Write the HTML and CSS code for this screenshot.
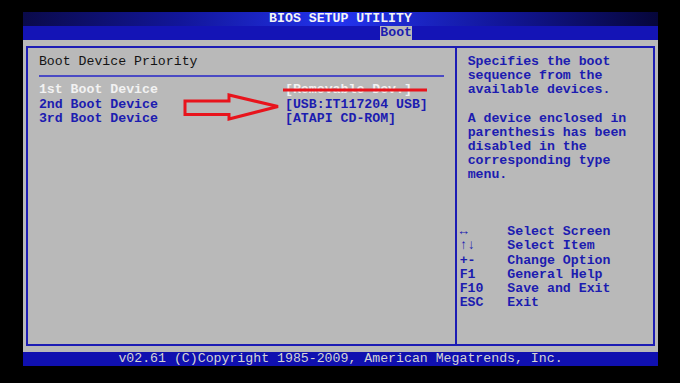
FILE: index.html
```html
<!DOCTYPE html>
<html>
<head>
<meta charset="utf-8">
<link rel="stylesheet" href="styles.css">
</head>
<body>
<div class="screen">
  <div class="title">BIOS SETUP UTILITY</div>
  <div class="menubar"><span class="tab">Boot</span></div>
  <div class="main">
    <div class="box">
      <div class="left">
        <div class="row heading">Boot Device Priority</div>
        <div class="row rule"><span class="rule-line"></span></div>
        <div class="devices">
          <span class="label white">1st Boot Device</span><span class="value white">[Removable Dev.]</span>
          <span class="label">2nd Boot Device</span><span class="value">[USB:IT117204 USB]</span>
          <span class="label">3rd Boot Device</span><span class="value">[ATAPI CD-ROM]</span>
        </div>
      </div>
      <div class="right">
        <div class="help">
          <div class="row">Specifies the boot</div>
          <div class="row">sequence from the</div>
          <div class="row">available devices.</div>
          <div class="row"></div>
          <div class="row">A device enclosed in</div>
          <div class="row">parenthesis has been</div>
          <div class="row">disabled in the</div>
          <div class="row">corresponding type</div>
          <div class="row">menu.</div>
        </div>
        <div class="keys">
          <span class="key">↔</span><span>Select Screen</span>
          <span class="key">↑↓</span><span>Select Item</span>
          <span class="key">+-</span><span>Change Option</span>
          <span class="key">F1</span><span>General Help</span>
          <span class="key">F10</span><span>Save and Exit</span>
          <span class="key">ESC</span><span>Exit</span>
        </div>
      </div>
    </div>
  </div>
  <div class="footer">v02.61 (C)Copyright 1985-2009, American Megatrends, Inc.</div>
  <svg class="marks" width="635" height="355" viewBox="0 0 635 355">
    <line x1="260" y1="78" x2="404" y2="78" stroke="#e8141c" stroke-width="3"/>
    <polygon points="162,89 206,89 206,83 255,94.5 206,107 206,102.5 162,102.5" fill="none" stroke="#e8141c" stroke-width="3" stroke-linejoin="miter"/>
  </svg>
</div>
</body>
</html>
```

FILE: styles.css
```css
html, body {
  margin: 0;
  padding: 0;
  background: #000;
}
body {
  width: 680px;
  height: 383px;
  overflow: hidden;
  padding-top: 11.5px;
  padding-left: 23px;
  box-sizing: border-box;
}
.screen {
  position: relative;
  width: 635px;
  font-family: "Liberation Mono", "DejaVu Sans Mono", monospace;
  font-size: 13.233px;
  font-weight: bold;
  line-height: 14.18px;
  color: #1c1cb0;
}
.title {
  height: 14.18px;
  text-align: center;
  color: #f4f4f4;
  background: linear-gradient(to right, #0a0a4a 0%, #12169a 25%, #2334ee 50%, #12169a 75%, #06063a 100%);
}
.menubar {
  height: 14.18px;
  background: #1414b6;
  padding-left: 357.3px;
}
.tab {
  display: inline-block;
  background: #b9b9b9;
  color: #1c1cb0;
  height: 14.18px;
  width: 31.76px;
}
.main {
  height: 311.96px;
  background: #b9b9b9;
  padding: 6.09px 2.74px 0 2.97px;
  box-sizing: border-box;
}
.box {
  height: 299.78px;
  border: 2px solid #1c1cb4;
  box-sizing: border-box;
  display: flex;
}
.left {
  width: 426.76px;
  padding: 7.09px 0 0 10.91px;
  box-sizing: border-box;
}
.right {
  flex: 1;
  border-left: 2px solid #1c1cb4;
  padding: 7.09px 0 0 10.91px;
  box-sizing: border-box;
}
.row {
  height: 14.18px;
  white-space: pre;
}
.heading {
  color: #141414;
  font-weight: normal;
}
.rule {
  display: flex;
  align-items: center;
}
.rule-line {
  display: block;
  width: 404.9px;
  height: 2px;
  margin-top: -1px;
  background: #4a4ac4;
}
.devices {
  display: grid;
  grid-template-columns: 246.14px auto;
  grid-auto-rows: 14.18px;
}
.white {
  color: #f2f2f2;
}
.help {
  height: 170.16px;
}
.keys {
  display: grid;
  grid-template-columns: 47.64px auto;
  grid-auto-rows: 14.18px;
  margin-left: -7.94px;
}
.footer {
  height: 14.18px;
  background: #1010b0;
  color: #d4d4d4;
  text-align: center;
  font-weight: normal;
}
.marks {
  position: absolute;
  left: 0;
  top: 0;
  pointer-events: none;
}
```
